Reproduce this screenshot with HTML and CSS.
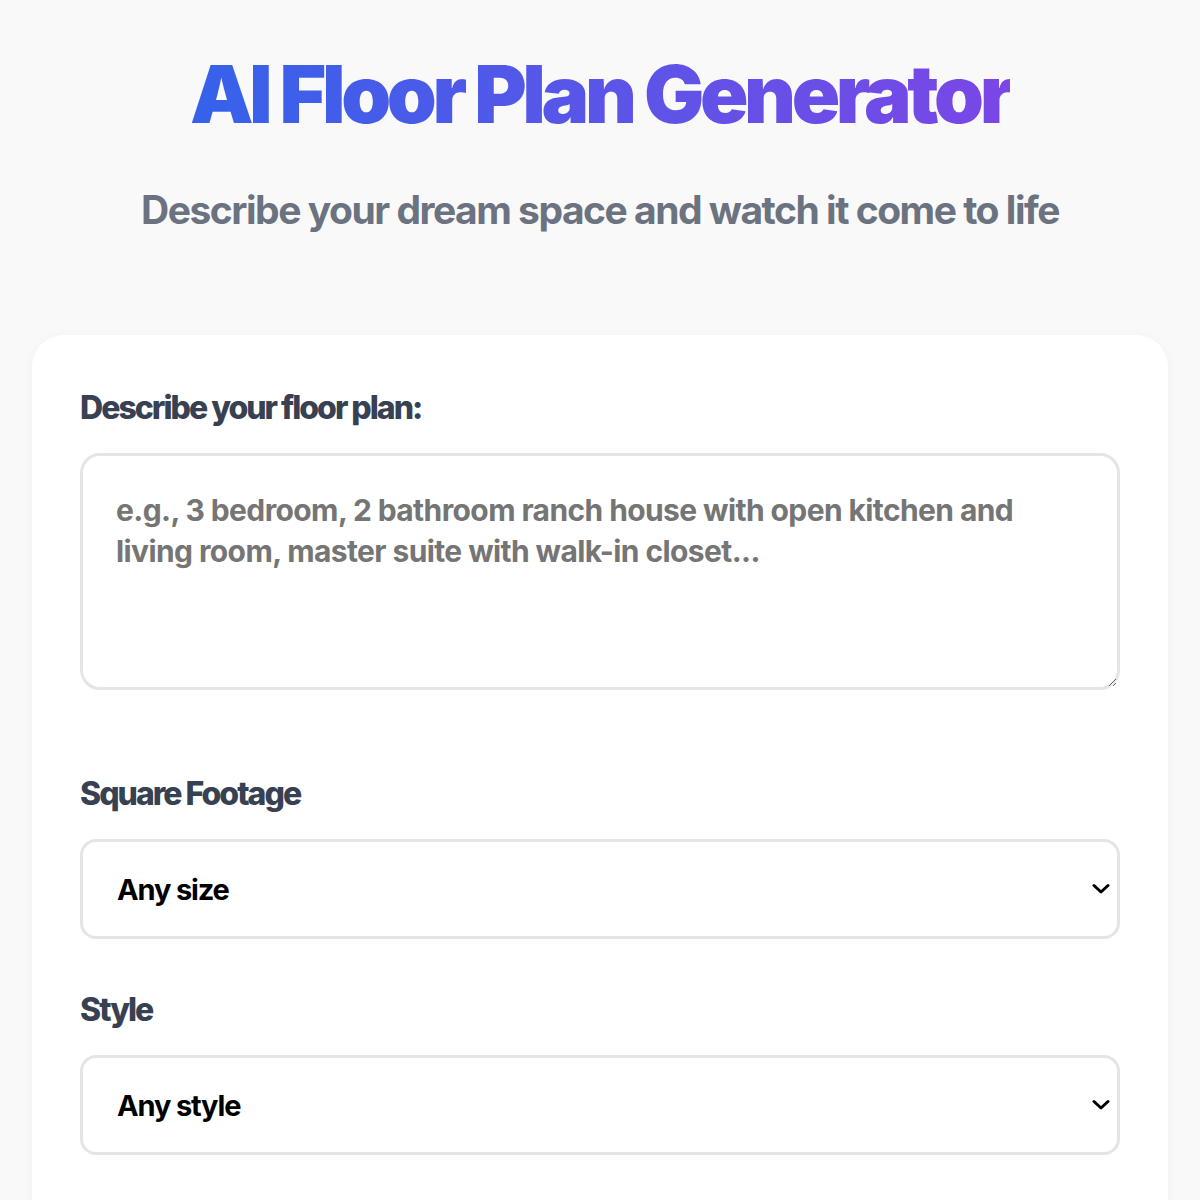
FILE: index.html
```html
<!DOCTYPE html>
<html lang="en">
<head>
<meta charset="utf-8">
<title>AI Floor Plan Generator</title>
<link rel="stylesheet" href="styles.css">
</head>
<body>
<main class="page">
  <header class="hero">
    <h1 class="title">AI Floor Plan Generator</h1>
    <p class="subtitle">Describe your dream space and watch it come to life</p>
  </header>
  <section class="card">
    <div class="group group-desc">
      <label class="label" for="desc">Describe your floor plan:</label>
      <textarea id="desc" class="textarea" placeholder="e.g., 3 bedroom, 2 bathroom ranch house with open kitchen and&#10;living room, master suite with walk-in closet..."></textarea>
    </div>
    <div class="group group-select">
      <label class="label" for="size">Square Footage</label>
      <div class="select-wrap">
        <select id="size" class="select">
          <option>Any size</option>
        </select>
        <svg class="chevron" width="18" height="12" viewBox="0 0 18 12" aria-hidden="true"><path d="M2 2.5 L9 9 L16 2.5" fill="none" stroke="#000" stroke-width="3" stroke-linecap="round" stroke-linejoin="round"/></svg>
      </div>
    </div>
    <div class="group group-select">
      <label class="label" for="style">Style</label>
      <div class="select-wrap">
        <select id="style" class="select">
          <option>Any style</option>
        </select>
        <svg class="chevron" width="18" height="12" viewBox="0 0 18 12" aria-hidden="true"><path d="M2 2.5 L9 9 L16 2.5" fill="none" stroke="#000" stroke-width="3" stroke-linecap="round" stroke-linejoin="round"/></svg>
      </div>
    </div>
  </section>
</main>
</body>
</html>
```
FILE: styles.css
```css
* { box-sizing: border-box; }
html, body { margin: 0; padding: 0; }
body {
  background: #f9f9f9;
  font-family: Inter, "Noto Sans", sans-serif;
  color: #111;
}
.page {
  padding: 46px 32px 0;
}
.hero { text-align: center; }
.title {
  margin: 0;
  font-size: 80px;
  line-height: 96px;
  font-weight: 900;
  letter-spacing: -0.055em;
  background: linear-gradient(90deg, #3562ea 0%, #5a55e8 50%, #7a47e6 100%);
  -webkit-background-clip: text;
  background-clip: text;
  color: transparent;
  display: inline-block;
}
.subtitle {
  margin: 45px 0 0;
  font-size: 39px;
  line-height: 46px;
  font-weight: 650;
  color: #6b7280;
  letter-spacing: -0.038em;
}
.card {
  margin-top: 102px;
  background: #fff;
  border-radius: 32px;
  padding: 54px 48px 48px;
  box-shadow: 0 2px 12px rgba(0,0,0,0.04);
  min-height: 900px;
}
.group { display: flex; flex-direction: column; }
.group-desc { margin-bottom: 85px; }
.group-select { margin-bottom: 52px; }
.label {
  font-size: 32px;
  line-height: 38px;
  font-weight: 800;
  color: #374151;
  letter-spacing: -0.062em;
  margin-bottom: 26px;
}
.textarea {
  display: block;
  width: 100%;
  height: 237px;
  border: 3px solid #e5e5e5;
  border-radius: 20px;
  padding: 34px 33px;
  font-family: inherit;
  font-size: 30px;
  line-height: 41px;
  font-weight: 650;
  letter-spacing: -0.02em;
  color: #111;
  background: #fff;
  outline: none;
}
.textarea::placeholder { color: #757575; opacity: 1; }
.select-wrap { position: relative; }
.select {
  display: block;
  width: 100%;
  height: 100px;
  -webkit-appearance: none;
  appearance: none;
  border: 3px solid #e5e5e5;
  border-radius: 16px;
  background: #fff;
  padding: 0 60px 0 34px;
  font-family: inherit;
  font-size: 29px;
  font-weight: 700;
  letter-spacing: -0.04em;
  color: #000;
  outline: none;
}
.chevron {
  position: absolute;
  right: 10px;
  top: 44px;
  pointer-events: none;
}
```
